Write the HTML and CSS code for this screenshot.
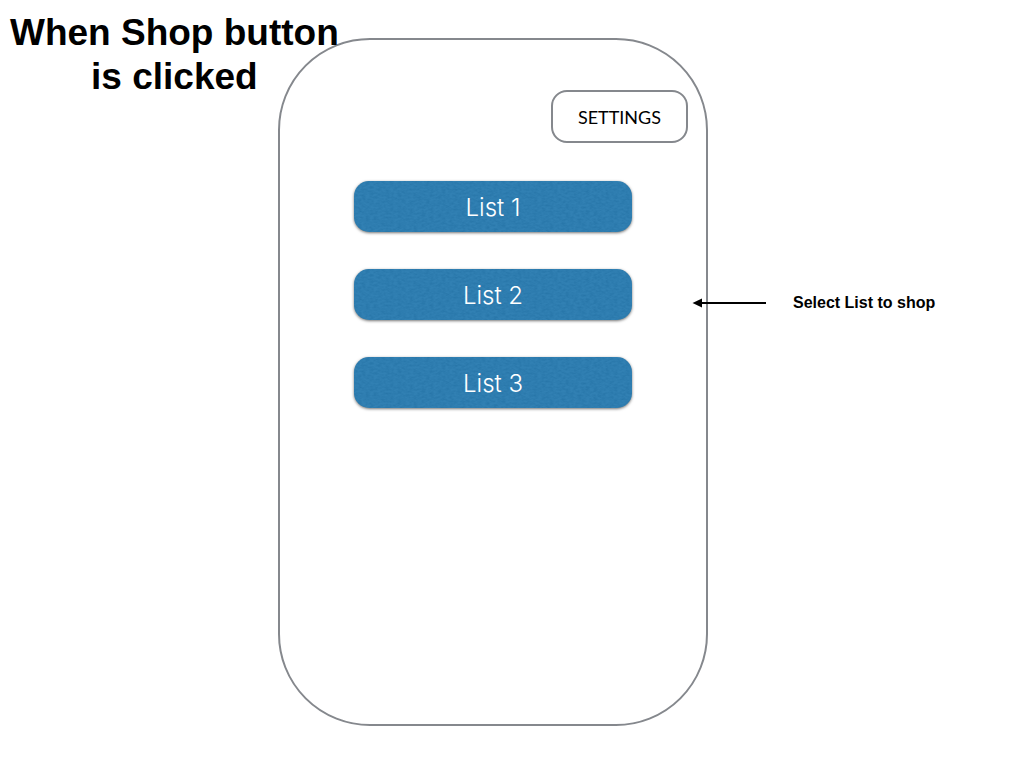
FILE: index.html
```html
<!DOCTYPE html>
<html lang="en">
<head>
<meta charset="utf-8">
<meta name="viewport" content="width=device-width, initial-scale=1">
<title>When Shop button is clicked</title>
<link rel="stylesheet" href="styles.css">
</head>
<body>
<main class="slide">
  <h1 class="title">When Shop button<br>is clicked</h1>
  <section class="phone" aria-label="Shop screen">
    <button class="settings" type="button">SETTINGS</button>
    <div class="lists">
      <button class="list" type="button">List 1</button>
      <button class="list" type="button">List 2</button>
      <button class="list" type="button">List 3</button>
    </div>
  </section>
  <aside class="note">
    <svg class="arrow" width="74" height="10" viewBox="0 0 74 10" aria-hidden="true">
      <path d="M0.5 5 L10 0.5 V9.5 Z" fill="#000"/>
      <path d="M9 5 H74" stroke="#000" stroke-width="2"/>
    </svg>
    <p class="note-text">Select List to shop</p>
  </aside>
</main>
</body>
</html>
```
FILE: styles.css
```css
* {
  box-sizing: border-box;
}

body {
  margin: 0;
  background: #fff;
  color: #000;
  font-family: "Liberation Sans", Arial, sans-serif;
}

.slide {
  display: grid;
  grid-template-columns: 278fr 430fr 316fr;
  min-height: 100vh;
  padding: 38px 0 42px;
}

.title {
  grid-area: 1 / 1 / 2 / 3;
  z-index: 1;
  justify-self: start;
  align-self: start;
  margin: -27px 0 0 10px;
  font-size: 37px;
  line-height: 44px;
  text-align: center;
}

.phone {
  grid-area: 1 / 2;
  display: flex;
  flex-direction: column;
  border: 2px solid #85888d;
  border-radius: 92px;
  padding: 50px 18px;
}

.settings {
  align-self: flex-end;
  height: 53px;
  padding: 0 25px;
  border: 2px solid #85888d;
  border-radius: 16px;
  background: #fff;
  color: #000;
  font: 400 18px/24px Lato, sans-serif;
}

.lists {
  display: flex;
  flex-direction: column;
  gap: 37px;
  margin: 38px 56px 0;
}

.list {
  height: 51px;
  padding: 2px 6px 0;
  border: 0;
  border-radius: 15px;
  background-color: #3180b3;
  background-image: url("data:image/svg+xml,%3Csvg xmlns='http://www.w3.org/2000/svg' width='278' height='51'%3E%3Cfilter id='n' x='0' y='0' width='1' height='1' color-interpolation-filters='sRGB'%3E%3CfeTurbulence type='fractalNoise' baseFrequency='.25 .5' numOctaves='4' seed='4'/%3E%3CfeColorMatrix values='0 0 0 0 0 0 0 0 0 .3 0 0 0 0 .5 .35 0 0 0 -.11'/%3E%3C/filter%3E%3Crect width='278' height='51' filter='url(%23n)'/%3E%3C/svg%3E");
  box-shadow: 0 1px 3px rgba(0, 0, 0, 0.55);
  color: #fff;
  font: 300 24px/30px Inter, "Liberation Sans", sans-serif;
}

.note {
  grid-area: 1 / 3;
  align-self: start;
  display: flex;
  align-items: center;
  gap: 27px;
  margin: 255px 0 0 -16px;
}

.arrow {
  flex: none;
}

.note-text {
  margin: 0;
  font-size: 16px;
  font-weight: 700;
  line-height: 20px;
}
```
